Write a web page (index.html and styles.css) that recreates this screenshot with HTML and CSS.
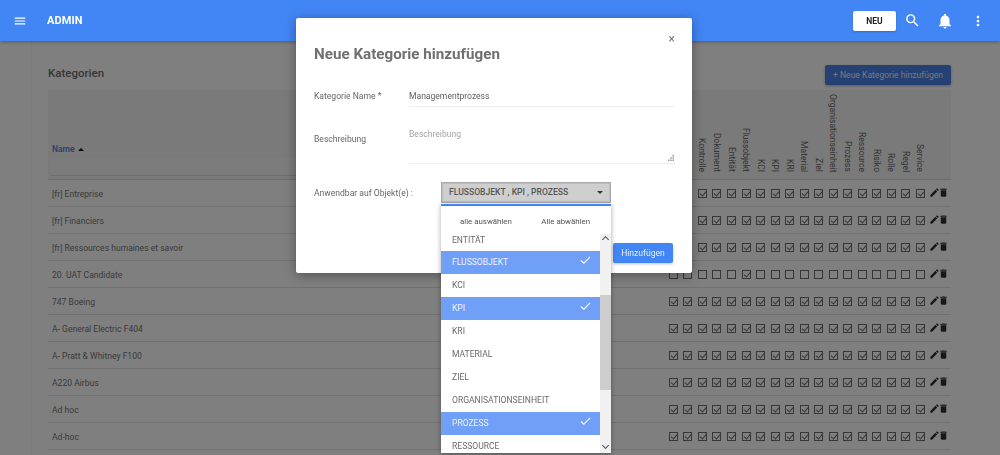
FILE: index.html
```html
<!DOCTYPE html>
<html lang="de">
<head>
<meta charset="utf-8">
<title>Kategorien</title>
<link rel="stylesheet" href="styles.css">
</head>
<body>
<svg class="defs" width="0" height="0" aria-hidden="true">
  <symbol id="pen" viewBox="0 0 24 24"><path d="M3 17.25V21h3.75L17.81 9.94l-3.75-3.75L3 17.25zM20.71 7.04a1 1 0 0 0 0-1.41l-2.34-2.34a1 1 0 0 0-1.41 0l-1.83 1.83 3.75 3.75 1.83-1.83z"/></symbol>
  <symbol id="bin" viewBox="0 0 24 24"><path d="M6 19c0 1.1.9 2 2 2h8c1.1 0 2-.9 2-2V7H6v12zM19 4h-3.5l-1-1h-5l-1 1H5v2h14V4z"/></symbol>
  <symbol id="tick" viewBox="0 0 12 10"><path d="M1 5.5l3.2 3L11 1.5" fill="none" stroke="currentColor" stroke-width="1.3"/></symbol>
</svg>

<header class="topbar">
  <svg class="ico menu" viewBox="0 0 24 24"><path d="M3 18h18v-2H3v2zm0-5h18v-2H3v2zm0-7v2h18V6H3z"/></svg>
  <span class="brand">ADMIN</span>
  <button class="new">NEU</button>
  <svg class="ico search" viewBox="0 0 24 24"><path d="M15.5 14h-.79l-.28-.27A6.471 6.471 0 0 0 16 9.5 6.5 6.5 0 1 0 9.5 16c1.61 0 3.09-.59 4.23-1.57l.27.28v.79l5 4.99L20.49 19l-4.99-5zm-6 0C7.01 14 5 11.99 5 9.5S7.01 5 9.5 5 14 7.01 14 9.5 11.99 14 9.5 14z"/></svg>
  <svg class="ico bell" viewBox="0 0 24 24"><path d="M12 22c1.1 0 2-.9 2-2h-4c0 1.1.89 2 2 2zm6-6v-5c0-3.07-1.64-5.64-4.5-6.32V4c0-.83-.67-1.5-1.5-1.5s-1.5.67-1.5 1.5v.68C7.63 5.36 6 7.92 6 11v5l-2 2v1h16v-1l-2-2z"/></svg>
  <svg class="ico more" viewBox="0 0 24 24"><path d="M12 8c1.1 0 2-.9 2-2s-.9-2-2-2-2 .9-2 2 .9 2 2 2zm0 2c-1.1 0-2 .9-2 2s.9 2 2 2 2-.9 2-2-.9-2-2-2zm0 6c-1.1 0-2 .9-2 2s.9 2 2 2 2-.9 2-2-.9-2-2-2z"/></svg>
</header>

<div class="shell">
  <aside class="rail"></aside>
  <main class="main">
    <div class="titlebar">
      <h2>Kategorien</h2>
      <button class="add">+ Neue Kategorie hinzufügen</button>
    </div>
    <div class="table">
      <div class="row head">
        <div class="namehead"><span class="sort">Name <b class="caret"></b></span><div class="filter"></div></div>
        <span class="v">Aktivität</span><span class="v">Ereignis</span><span class="v">Kontrolle</span><span class="v">Dokument</span><span class="v">Entität</span><span class="v">Flussobjekt</span><span class="v">KCI</span><span class="v">KPI</span><span class="v">KRI</span><span class="v">Material</span><span class="v">Ziel</span><span class="v">Organisationseinheit</span><span class="v">Prozess</span><span class="v">Ressource</span><span class="v">Risiko</span><span class="v">Rolle</span><span class="v">Regel</span><span class="v">Service</span>
      </div>
      <div class="row body"><span class="name">[fr] Entreprise</span><i class="c"></i><i class="c"></i><i class="c"></i><i class="c"></i><i class="c"></i><i class="c"></i><i class="c"></i><i class="c"></i><i class="c"></i><i class="c"></i><i class="c"></i><i class="c"></i><i class="c"></i><i class="c"></i><i class="c"></i><i class="c"></i><i class="c"></i><i class="c"></i><span class="act"><svg><use href="#pen"/></svg><svg><use href="#bin"/></svg></span></div>
      <div class="row body"><span class="name">[fr] Financiers</span><i class="c"></i><i class="c"></i><i class="c"></i><i class="c"></i><i class="c"></i><i class="c"></i><i class="c"></i><i class="c"></i><i class="c"></i><i class="c"></i><i class="c"></i><i class="c"></i><i class="c"></i><i class="c"></i><i class="c"></i><i class="c"></i><i class="c"></i><i class="c"></i><span class="act"><svg><use href="#pen"/></svg><svg><use href="#bin"/></svg></span></div>
      <div class="row body"><span class="name">[fr] Ressources humaines et savoir</span><i class="c"></i><i class="c"></i><i class="c"></i><i class="c"></i><i class="c"></i><i class="c"></i><i class="c"></i><i class="c"></i><i class="c"></i><i class="c"></i><i class="c"></i><i class="c"></i><i class="c"></i><i class="c"></i><i class="c"></i><i class="c"></i><i class="c"></i><i class="c"></i><span class="act"><svg><use href="#pen"/></svg><svg><use href="#bin"/></svg></span></div>
      <div class="row body"><span class="name">20. UAT Candidate</span><i class="c o"></i><i class="c o"></i><i class="c o"></i><i class="c o"></i><i class="c o"></i><i class="c"></i><i class="c o"></i><i class="c o"></i><i class="c o"></i><i class="c o"></i><i class="c o"></i><i class="c o"></i><i class="c o"></i><i class="c o"></i><i class="c o"></i><i class="c o"></i><i class="c o"></i><i class="c o"></i><span class="act"><svg><use href="#pen"/></svg><svg><use href="#bin"/></svg></span></div>
      <div class="row body"><span class="name">747 Boeing</span><i class="c"></i><i class="c"></i><i class="c"></i><i class="c"></i><i class="c"></i><i class="c"></i><i class="c"></i><i class="c"></i><i class="c"></i><i class="c"></i><i class="c"></i><i class="c"></i><i class="c"></i><i class="c"></i><i class="c"></i><i class="c"></i><i class="c"></i><i class="c"></i><span class="act"><svg><use href="#pen"/></svg><svg><use href="#bin"/></svg></span></div>
      <div class="row body"><span class="name">A- General Electric F404</span><i class="c"></i><i class="c"></i><i class="c"></i><i class="c"></i><i class="c"></i><i class="c"></i><i class="c"></i><i class="c"></i><i class="c"></i><i class="c"></i><i class="c"></i><i class="c"></i><i class="c"></i><i class="c"></i><i class="c"></i><i class="c"></i><i class="c"></i><i class="c"></i><span class="act"><svg><use href="#pen"/></svg><svg><use href="#bin"/></svg></span></div>
      <div class="row body"><span class="name">A- Pratt &amp; Whitney F100</span><i class="c"></i><i class="c"></i><i class="c"></i><i class="c"></i><i class="c"></i><i class="c"></i><i class="c"></i><i class="c"></i><i class="c"></i><i class="c"></i><i class="c"></i><i class="c"></i><i class="c"></i><i class="c"></i><i class="c"></i><i class="c"></i><i class="c"></i><i class="c"></i><span class="act"><svg><use href="#pen"/></svg><svg><use href="#bin"/></svg></span></div>
      <div class="row body"><span class="name">A220 Airbus</span><i class="c"></i><i class="c"></i><i class="c"></i><i class="c"></i><i class="c"></i><i class="c"></i><i class="c"></i><i class="c"></i><i class="c"></i><i class="c"></i><i class="c"></i><i class="c"></i><i class="c"></i><i class="c"></i><i class="c"></i><i class="c"></i><i class="c"></i><i class="c"></i><span class="act"><svg><use href="#pen"/></svg><svg><use href="#bin"/></svg></span></div>
      <div class="row body"><span class="name">Ad hoc</span><i class="c"></i><i class="c"></i><i class="c"></i><i class="c"></i><i class="c"></i><i class="c"></i><i class="c"></i><i class="c"></i><i class="c"></i><i class="c"></i><i class="c"></i><i class="c"></i><i class="c"></i><i class="c"></i><i class="c"></i><i class="c"></i><i class="c"></i><i class="c"></i><span class="act"><svg><use href="#pen"/></svg><svg><use href="#bin"/></svg></span></div>
      <div class="row body"><span class="name">Ad-hoc</span><i class="c"></i><i class="c"></i><i class="c"></i><i class="c"></i><i class="c"></i><i class="c"></i><i class="c"></i><i class="c"></i><i class="c"></i><i class="c"></i><i class="c"></i><i class="c"></i><i class="c"></i><i class="c"></i><i class="c"></i><i class="c"></i><i class="c"></i><i class="c"></i><span class="act"><svg><use href="#pen"/></svg><svg><use href="#bin"/></svg></span></div>
    </div>
  </main>
</div>

<div class="backdrop"></div>

<section class="modal">
  <span class="close">×</span>
  <h1>Neue Kategorie hinzufügen</h1>
  <div class="field f-name">
    <label>Kategorie Name *</label>
    <div class="input">Managementprozess</div>
  </div>
  <div class="field f-desc">
    <label>Beschreibung</label>
    <div class="input area">Beschreibung
      <svg class="grip" viewBox="0 0 8 8"><path d="M6 0h2v2H6zM6 3h2v2H6zM6 6h2v2H6zM3 3h2v2H3zM3 6h2v2H3zM0 6h2v2H0z"/></svg>
    </div>
  </div>
  <div class="field f-obj">
    <label>Anwendbar auf Objekt(e) :</label>
    <div class="select">FLUSSOBJEKT , KPI , PROZESS<b class="arrow"></b></div>
  </div>
  <div class="menu-drop">
    <div class="menu-actions"><span>alle auswählen</span><span>Alle abwählen</span></div>
    <div class="menu-body">
      <ul class="options">
        <li class="first">ENTITÄT</li>
        <li class="on">FLUSSOBJEKT<svg><use href="#tick"/></svg></li>
        <li>KCI</li>
        <li class="on">KPI<svg><use href="#tick"/></svg></li>
        <li>KRI</li>
        <li>MATERIAL</li>
        <li>ZIEL</li>
        <li>ORGANISATIONSEINHEIT</li>
        <li class="on">PROZESS<svg><use href="#tick"/></svg></li>
        <li>RESSOURCE</li>
      </ul>
      <div class="scroll">
        <div class="sb-top"><b class="up"></b></div>
        <div class="thumb"></div>
        <div class="sb-bottom"><b class="down"></b></div>
      </div>
    </div>
  </div>
  <button class="submit">Hinzufügen</button>
</section>
</body>
</html>
```
FILE: styles.css
```css
* { box-sizing: border-box; }
html, body { height: 100%; }
body {
  margin: 0;
  overflow: hidden;
  background: #fff;
  font-family: Roboto, "Liberation Sans", sans-serif;
  color: #757575;
}
.defs { position: absolute; }

/* top bar */
.topbar {
  position: relative;
  z-index: 20;
  height: 41px;
  display: flex;
  align-items: center;
  background: #4285f4;
  box-shadow: 0 1px 3px rgba(0,0,0,.3);
  color: #fff;
  padding: 0 14px 0 13px;
}
.ico { fill: #fff; display: block; flex: none; }
.menu { width: 14px; height: 14px; }
.brand { margin-left: 20px; font-size: 11px; font-weight: 700; letter-spacing: .1px; margin-right: auto; }
.new {
  width: 43px; height: 20px; border: 0; border-radius: 2px; padding: 0;
  background: #fff; color: #222; font: 700 8.5px Roboto, sans-serif;
  box-shadow: 0 1px 2px rgba(0,0,0,.2);
}
.search { width: 17px; height: 17px; margin-left: 8px; }
.bell { width: 18px; height: 18px; margin-left: 15px; }
.more { width: 16px; height: 16px; margin-left: 16px; }

/* page behind the dialog */
.shell { display: flex; height: calc(100% - 41px); }
.rail { width: 32px; flex: none; border-right: 1px solid #f6f6f6; }
.main { flex: 1; padding: 24px 49px 0 16px; }
.titlebar { display: flex; justify-content: space-between; align-items: flex-start; height: 25px; }
.titlebar h2 { margin: 0; font-size: 11.5px; font-weight: 500; color: #6d6d6d; line-height: 16px; }
.add {
  width: 126px; height: 20px; border: 0; border-radius: 2px; padding: 0;
  background: #4a80e4; color: #e8f0ff; font: 400 8.57px Roboto, sans-serif;
  box-shadow: 0 1px 3px rgba(0,0,0,.3);
}
.row {
  display: grid;
  grid-template-columns: 618.2px repeat(18, 14.53px) 1fr;
}
.head {
  height: 90px;
  background: #f4f4f4;
  border-bottom: 1px solid #dcdcdc;
  padding-bottom: 3px;
  align-items: end;
}
.namehead { display: flex; flex-direction: column; padding-left: 3px; }
.sort { font-size: 8.5px; font-weight: 500; color: #4d7fdc; padding-left: 1px; height: 14px; line-height: 10px; }
.caret { display: inline-block; border: 3px solid transparent; border-top: 0; border-bottom: 3px solid #111; vertical-align: 1px; margin-left: 1px; }
.filter { height: 18px; background: #f9f9f9; border-bottom: 1px solid #dcdcdc; }
.v {
  writing-mode: vertical-rl;
  justify-self: center;
  font-size: 8.57px;
  line-height: 12px;
  color: #6a6a6a;
  padding-bottom: 4px;
  white-space: nowrap;
}
.body { height: 27px; align-items: center; border-bottom: 1px solid #e3e3e3; }
.name { padding: 1px 0 0 4px; font-size: 8.57px; color: #757575; }
.c {
  position: relative;
  display: block;
  justify-self: center;
  width: 9px; height: 9px;
  border: 1px solid #6e6e6e;
}
.c::after {
  content: "";
  position: absolute;
  left: 2px; top: 0;
  width: 3px; height: 5px;
  border: solid #6e6e6e;
  border-width: 0 1px 1px 0;
  transform: rotate(40deg);
}
.c.o::after { display: none; }
.act { display: flex; padding: 0 0 2px 1.6px; }
.act svg { width: 11px; height: 11px; fill: #2e2e2e; }
.act svg + svg { margin-left: -1.6px; }

/* overlay */
.backdrop {
  position: fixed;
  inset: 0;
  z-index: 10;
  background: rgba(0,0,0,.5);
}
.modal {
  position: fixed;
  z-index: 30;
  left: 296px; top: 18px;
  width: 396px; height: 255px;
  background: #fff;
  border-radius: 2px;
  box-shadow: 0 2px 12px rgba(0,0,0,.35);
  padding: 27px 17px 0 18px;
  color: #666;
}
.close { position: absolute; right: 17px; top: 13px; font-size: 12px; line-height: 16px; color: #777; }
.modal h1 { margin: 0 0 26px; font-size: 15.2px; font-weight: 700; line-height: 19px; color: #707070; }
.field { display: flex; font-size: 8.57px; line-height: 12px; }
.field label { flex: none; width: 95px; }
.input { flex: 1; border-bottom: 1px solid #eee; color: #5e5e5e; }
.f-name { height: 17px; margin-bottom: 21px; }
.f-name .input { height: 17px; }
.f-desc { height: 36px; align-items: flex-start; margin-bottom: 18px; }
.f-desc label { margin-top: 5px; }
.area { position: relative; height: 36px; color: #a3a3a3; }
.grip { position: absolute; right: 1px; bottom: 2px; width: 6px; height: 6px; fill: #999; }
.f-obj { align-items: center; }
.f-obj label { width: 127px; }
.select {
  position: relative;
  width: 170px; height: 21px;
  background: #cfcfcf;
  border: 1px solid #aaa;
  box-shadow: inset 0 0 0 1px #bdbdbd;
  padding: 0 7px;
  font-weight: 500;
  line-height: 19px;
  color: #555;
}
.arrow { position: absolute; right: 7px; top: 8px; border: 3px solid transparent; border-bottom: 0; border-top: 3px solid #333; }

.menu-drop {
  position: absolute;
  left: 145px; top: 186px;
  width: 170px; height: 249px;
  background: #fff;
  border-top: 2px solid #4285f4;
  box-shadow: 0 1px 5px rgba(0,0,0,.35);
  display: flex;
  flex-direction: column;
  z-index: 2;
}
.menu-actions {
  height: 28px; flex: none;
  display: flex;
  padding: 10px 21px 0 19px;
  justify-content: space-between;
  font-size: 7.86px;
  line-height: 11px;
  color: #555;
}
.menu-body { flex: 1; display: flex; min-height: 0; overflow: hidden; }
.options { list-style: none; margin: 0; padding: 0; flex: 1; overflow: hidden; }
.options li {
  position: relative;
  height: 22.9px;
  line-height: 22.9px;
  padding-left: 11px;
  font-size: 8.57px;
  color: #6a6a6a;
}
.options .first { margin-top: -5.5px; }
.options .on { background: #6f9ff6; color: #eef3fd; }
.options svg { position: absolute; right: 9px; top: 4px; width: 11px; height: 10px; color: #f4f7fe; }
.scroll { width: 11px; flex: none; display: flex; flex-direction: column; background: #f1f1f1; }
.sb-top { height: 61px; flex: none; display: flex; justify-content: center; padding-top: 3px; }
.thumb { height: 95px; flex: none; background: #cdcdcd; }
.sb-bottom { flex: 1; display: flex; justify-content: center; align-items: flex-end; padding-bottom: 5px; }
.up, .down {
  display: block; width: 5px; height: 5px;
  border: solid #555; border-width: 1px 0 0 1px;
  transform: rotate(45deg);
}
.down { transform: rotate(225deg); }
.submit {
  position: absolute;
  left: 317px; top: 225px;
  width: 60px; height: 20px;
  border: 0; border-radius: 2px; padding: 0;
  background: #4285f4; color: #e6eefd;
  font: 400 8.57px Roboto, sans-serif;
  box-shadow: 0 1px 3px rgba(0,0,0,.25);
}
```
